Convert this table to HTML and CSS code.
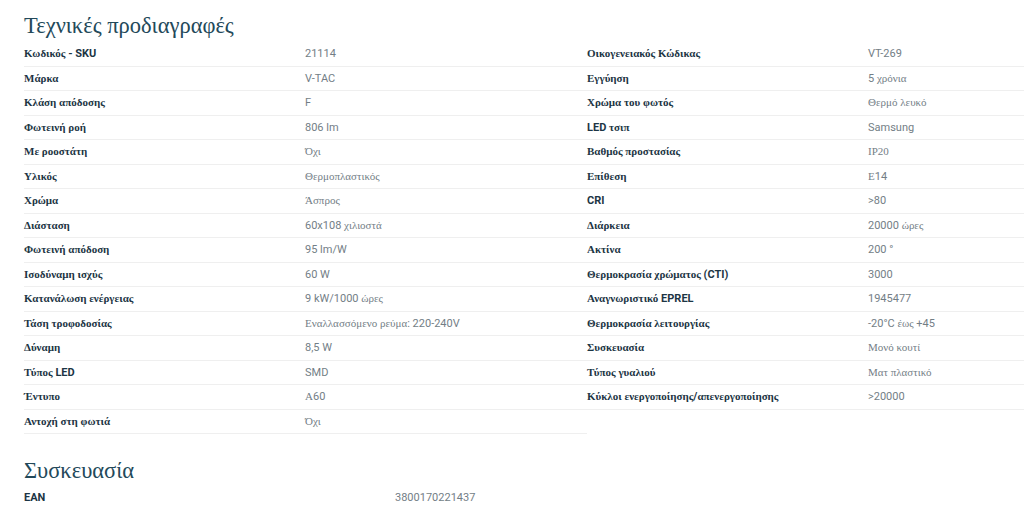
FILE: index.html
```html
<!DOCTYPE html>
<html lang="el">
<head>
<meta charset="utf-8">
<title>Τεχνικές προδιαγραφές</title>
<link rel="stylesheet" href="styles.css">
</head>
<body>
<div class="page">
  <h2 class="title g">Τεχνικές προδιαγραφές</h2>
  <div class="specs">
    <div class="col left">
      <div class="row"><div class="k"><span class="g">Κωδικός</span> - SKU</div><div class="v">21114</div></div>
      <div class="row"><div class="k"><span class="g">Μάρκα</span></div><div class="v">V-TAC</div></div>
      <div class="row"><div class="k"><span class="g">Κλάση απόδοσης</span></div><div class="v">F</div></div>
      <div class="row"><div class="k"><span class="g">Φωτεινή ροή</span></div><div class="v">806 lm</div></div>
      <div class="row"><div class="k"><span class="g">Με ροοστάτη</span></div><div class="v"><span class="g">Όχι</span></div></div>
      <div class="row"><div class="k"><span class="g">Υλικός</span></div><div class="v"><span class="g">Θερμοπλαστικός</span></div></div>
      <div class="row"><div class="k"><span class="g">Χρώμα</span></div><div class="v"><span class="g">Άσπρος</span></div></div>
      <div class="row"><div class="k"><span class="g">Διάσταση</span></div><div class="v">60x108 <span class="g">χιλιοστά</span></div></div>
      <div class="row"><div class="k"><span class="g">Φωτεινή απόδοση</span></div><div class="v">95 lm/W</div></div>
      <div class="row"><div class="k"><span class="g">Ισοδύναμη ισχύς</span></div><div class="v">60 W</div></div>
      <div class="row"><div class="k"><span class="g">Κατανάλωση ενέργειας</span></div><div class="v">9 kW/1000 <span class="g">ώρες</span></div></div>
      <div class="row"><div class="k"><span class="g">Τάση τροφοδοσίας</span></div><div class="v"><span class="g">Εναλλασσόμενο ρεύμα</span>: 220-240V</div></div>
      <div class="row"><div class="k"><span class="g">Δύναμη</span></div><div class="v">8,5 W</div></div>
      <div class="row"><div class="k"><span class="g">Τύπος</span> LED</div><div class="v">SMD</div></div>
      <div class="row"><div class="k"><span class="g">Έντυπο</span></div><div class="v"><span class="g">Α</span>60</div></div>
      <div class="row"><div class="k"><span class="g">Αντοχή στη φωτιά</span></div><div class="v"><span class="g">Όχι</span></div></div>
    </div>
    <div class="col right">
      <div class="row"><div class="k"><span class="g">Οικογενειακός Κώδικας</span></div><div class="v">VT-269</div></div>
      <div class="row"><div class="k"><span class="g">Εγγύηση</span></div><div class="v">5 <span class="g">χρόνια</span></div></div>
      <div class="row"><div class="k"><span class="g">Χρώμα του φωτός</span></div><div class="v"><span class="g">Θερμό λευκό</span></div></div>
      <div class="row"><div class="k">LED <span class="g">τσιπ</span></div><div class="v">Samsung</div></div>
      <div class="row"><div class="k"><span class="g">Βαθμός προστασίας</span></div><div class="v"><span class="g">ΙΡ20</span></div></div>
      <div class="row"><div class="k"><span class="g">Επίθεση</span></div><div class="v"><span class="g">Ε</span>14</div></div>
      <div class="row"><div class="k">CRI</div><div class="v">&gt;80</div></div>
      <div class="row"><div class="k"><span class="g">Διάρκεια</span></div><div class="v">20000 <span class="g">ώρες</span></div></div>
      <div class="row"><div class="k"><span class="g">Ακτίνα</span></div><div class="v">200 °</div></div>
      <div class="row"><div class="k"><span class="g">Θερμοκρασία χρώματος</span> (CTI)</div><div class="v">3000</div></div>
      <div class="row"><div class="k"><span class="g">Αναγνωριστικό</span> EPREL</div><div class="v">1945477</div></div>
      <div class="row"><div class="k"><span class="g">Θερμοκρασία λειτουργίας</span></div><div class="v">-20°C <span class="g">έως</span> +45</div></div>
      <div class="row"><div class="k"><span class="g">Συσκευασία</span></div><div class="v"><span class="g">Μονό κουτί</span></div></div>
      <div class="row"><div class="k"><span class="g">Τύπος γυαλιού</span></div><div class="v"><span class="g">Ματ πλαστικό</span></div></div>
      <div class="row"><div class="k"><span class="g">Κύκλοι ενεργοποίησης</span>/<span class="g">απενεργοποίησης</span></div><div class="v">&gt;20000</div></div>
    </div>
  </div>
  <h2 class="title sub g">Συσκευασία</h2>
  <div class="pack">
    <div class="prow"><div class="k">EAN</div><div class="v">3800170221437</div></div>
  </div>
</div>
</body>
</html>
```
FILE: styles.css
```css
html, body {
  margin: 0;
  padding: 0;
  background: #ffffff;
}
body {
  font-family: Roboto, "Liberation Sans", sans-serif;
  font-size: 11px;
  color: #1c3544;
}
.page {
  box-sizing: border-box;
  width: 100%;
  padding: 9px 0 0 24px;
}
.g {
  font-family: "Liberation Serif", serif;
}
.title {
  margin: 0;
  font-weight: 400;
  font-size: 22.5px;
  line-height: 33px;
  color: #23495a;
}
.specs {
  display: flex;
}
.col {
  display: flex;
  flex-direction: column;
}
.left {
  width: 563px;
}
.right {
  flex: 1;
}
.row {
  display: grid;
  grid-template-columns: 281px 1fr;
  height: 23.5px;
  line-height: 23.5px;
  border-bottom: 1px solid #efefef;
}
.k {
  font-weight: 700;
  color: #1c3544;
  white-space: nowrap;
}
.v {
  color: #737e86;
  white-space: nowrap;
}
.sub {
  margin-top: 20px;
}
.pack {
  display: flex;
  flex-direction: column;
}
.prow {
  display: grid;
  grid-template-columns: 371px 1fr;
  line-height: 22px;
}
```
